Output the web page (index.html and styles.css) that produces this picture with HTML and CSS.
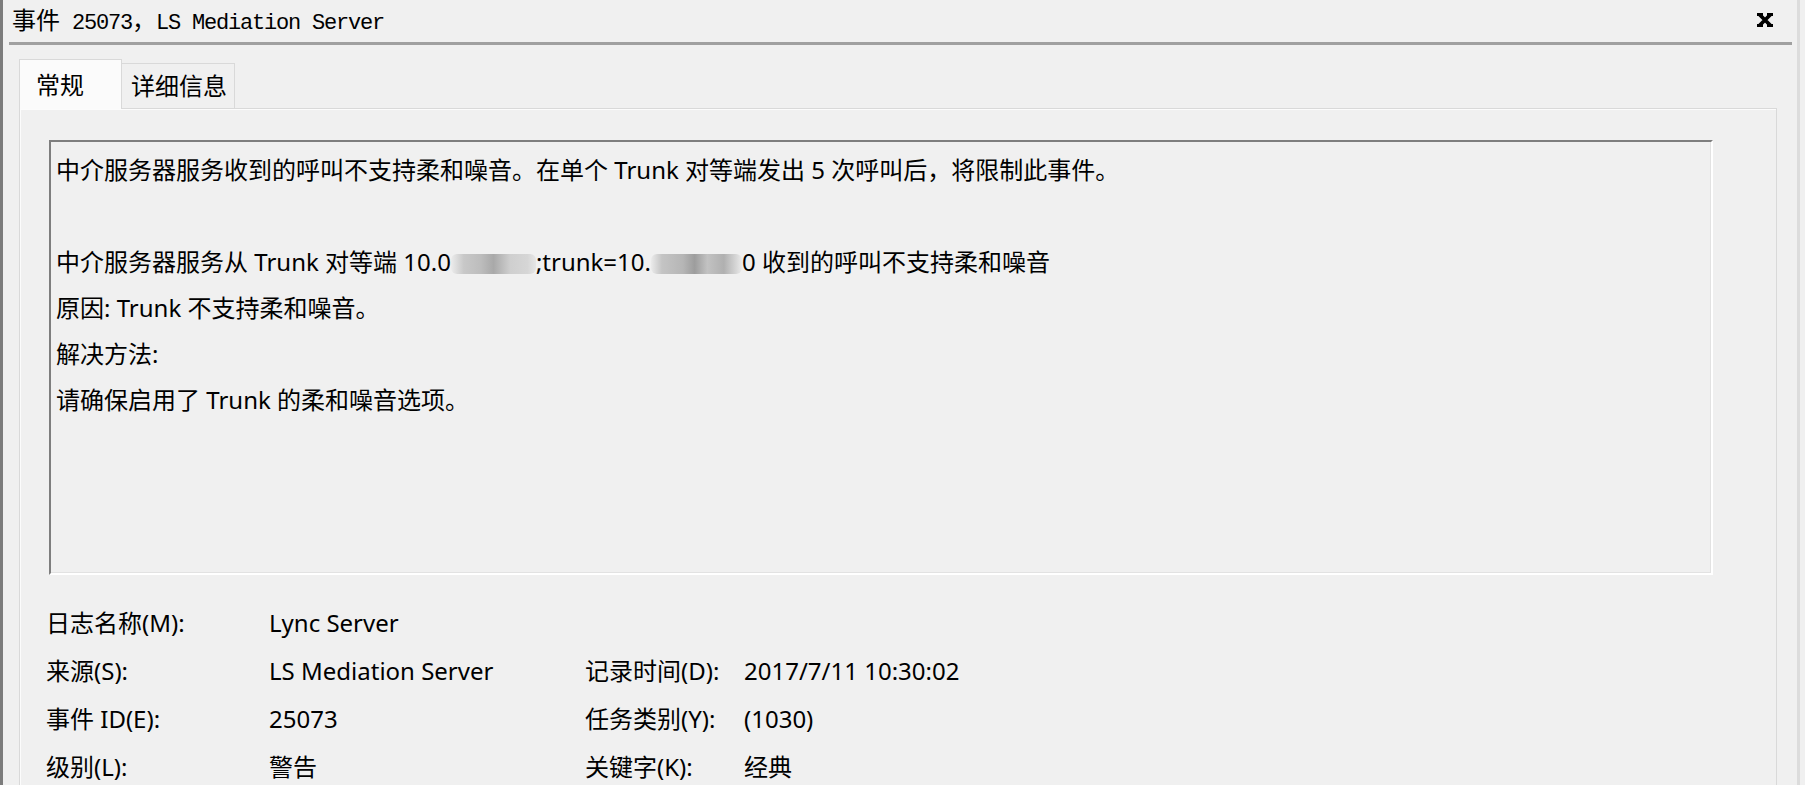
FILE: index.html
```html
<!DOCTYPE html>
<html lang="zh-CN">
<head>
<meta charset="utf-8">
<title>事件 25073，LS Mediation Server</title>
<link rel="stylesheet" href="styles.css">
</head>
<body>
<div class="window">
  <div class="titlebar">
    <div class="title"><span class="cjk">事件</span> 25073<span class="cjk">，</span>LS Mediation Server</div>
    <svg class="close" width="16" height="16" viewBox="0 0 16 16" aria-label="关闭">
      <path d="M2.5 2.5 L13.5 13.5 M13.5 2.5 L2.5 13.5" stroke="#000" stroke-width="3.8" fill="none"/>
      <rect x="0" y="1" width="6" height="3" fill="#000"/>
      <rect x="10" y="1" width="6" height="3" fill="#000"/>
      <rect x="0" y="12" width="6" height="3" fill="#000"/>
      <rect x="10" y="12" width="6" height="3" fill="#000"/>
    </svg>
  </div>
  <div class="sep"></div>
  <div class="content">
    <div class="tabs">
      <div class="tab active">常规</div>
      <div class="tab">详细信息</div>
    </div>
    <div class="panel">
      <div class="msgbox">
        <p class="line">中介服务器服务收到的呼叫不支持柔和噪音。在单个 Trunk 对等端发出 5 次呼叫后，将限制此事件。</p>
        <p class="line blank"></p>
        <p class="line">中介服务器服务从 Trunk 对等端 10.0<span class="blur b1"></span>;trunk=10.<span class="blur b2"></span>0 收到的呼叫不支持柔和噪音</p>
        <p class="line">原因: Trunk 不支持柔和噪音。</p>
        <p class="line">解决方法:</p>
        <p class="line">请确保启用了 Trunk 的柔和噪音选项。</p>
      </div>
      <div class="props">
        <div class="lbl">日志名称(M):</div><div class="val">Lync Server</div><div></div><div></div>
        <div class="lbl">来源(S):</div><div class="val">LS Mediation Server</div><div class="lbl">记录时间(D):</div><div class="val">2017/7/11 10:30:02</div>
        <div class="lbl">事件 ID(E):</div><div class="val">25073</div><div class="lbl">任务类别(Y):</div><div class="val">(1030)</div>
        <div class="lbl">级别(L):</div><div class="val">警告</div><div class="lbl">关键字(K):</div><div class="val">经典</div>
      </div>
    </div>
  </div>
</div>
</body>
</html>
```

FILE: styles.css
```css
html, body {
  margin: 0;
  padding: 0;
}
body {
  width: 1805px;
  height: 785px;
  overflow: hidden;
  background: #f0f0f0;
  font-family: "Noto Sans", "Noto Sans CJK SC", sans-serif;
  font-size: 24px;
  color: #000;
}
.window {
  width: 1800px;
  height: 785px;
  box-sizing: border-box;
  border-left: 3px solid #7c7c7c;
  border-right: 3px solid #dcdcdc;
  display: flex;
  flex-direction: column;
}
.titlebar {
  flex-shrink: 0;
  height: 42px;
  display: flex;
  align-items: center;
  justify-content: space-between;
  padding-left: 9px;
  padding-right: 24px;
}
.title {
  font-family: "Liberation Mono", "Noto Sans CJK SC", monospace;
  font-size: 22px;
  letter-spacing: -1.2px;
  white-space: pre;
  line-height: 24px;
}
.title .cjk {
  font-family: "Noto Sans CJK SC", sans-serif;
  font-size: 24px;
  letter-spacing: 0;
}
.close {
  display: block;
  margin-top: -2px;
}
.sep {
  flex-shrink: 0;
  height: 3px;
  background: #a0a0a0;
  margin-left: 6px;
  margin-right: 5px;
}
.content {
  flex: 1;
  min-height: 0;
  display: flex;
  flex-direction: column;
  padding-left: 16px;
  padding-right: 20px;
}
.tabs {
  flex-shrink: 0;
  height: 63px;
  display: flex;
  align-items: flex-end;
}
.tab {
  box-sizing: border-box;
  height: 45px;
  width: 113px;
  border: 1px solid #d9d9d9;
  border-bottom: none;
  border-left: none;
  padding-left: 9px;
  display: flex;
  align-items: center;
  line-height: 1;
  background: #f0f0f0;
}
.tab.active {
  height: 50px;
  width: 103px;
  padding-left: 16px;
  border-left: 1px solid #d9d9d9;
  background: #fbfbfb;
  margin-bottom: -1px;
  position: relative;
  z-index: 1;
}
.panel {
  flex: 1 0 auto;
  border: 1px solid #d9d9d9;
  border-bottom: none;
  box-shadow: inset 1px 1px 0 #fcfcfc;
  padding-top: 31px;
}
.msgbox {
  box-sizing: border-box;
  width: 1664px;
  height: 435px;
  margin-left: 29px;
  border-style: solid;
  border-width: 2px;
  border-color: #7e7e7e #ffffff #ffffff #7e7e7e;
  box-shadow: inset -1px -1px 0 #e2e2e2;
  padding: 5px 5px;
}
.line {
  margin: 0;
  height: 46px;
  line-height: 46px;
  white-space: nowrap;
}
.blur {
  display: inline-block;
  height: 20px;
  vertical-align: -3px;
  border-radius: 6px;
}
.b1 {
  width: 85px;
  background: linear-gradient(90deg, #ececec 0%, #c8c8c8 15%, #bdbdbd 35%, #a9a9a9 50%, #cfcfcf 70%, #d6d6d6 90%, #e6e6e6 100%);
}
.b2 {
  width: 91px;
  background: linear-gradient(90deg, #ebebeb 0%, #c4c4c4 12%, #b6b6b6 35%, #9d9d9d 48%, #c2c2c2 62%, #b0b0b0 80%, #d8d8d8 94%, #ebebeb 100%);
}
.props {
  margin-top: 24px;
  margin-left: 26px;
  display: grid;
  grid-template-columns: 223px 316px 159px 1fr;
  grid-auto-rows: 48px;
  align-items: center;
  white-space: nowrap;
  line-height: 1.2;
}
```
